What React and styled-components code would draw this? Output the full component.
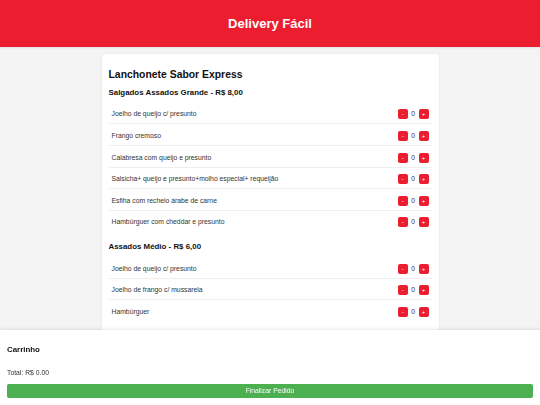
import React from "react";
import styled, { createGlobalStyle } from "styled-components";

const Global = createGlobalStyle`
  html, body { margin: 0; padding: 0; }
  body {
    background: #f4f4f4;
    font-family: "Liberation Sans", Arial, sans-serif;
    color: #333;
    padding-bottom: 90px;
  }
  * { box-sizing: border-box; }
`;

const Header = styled.header`
  height: 47px;
  background: #ec1d2f;
  color: #fff;
  display: flex;
  align-items: center;
  justify-content: center;
  box-shadow: 0 1px 2px rgba(0, 0, 0, 0.08);
`;

const Brand = styled.h1`
  margin: 0;
  font-size: 13px;
  line-height: 16px;
  font-weight: 700;
`;

const Card = styled.main`
  max-width: 337px;
  margin: 7px auto 0;
  background: #fff;
  border-radius: 3px;
  box-shadow: 0 0 3px rgba(0, 0, 0, 0.07);
  padding: 14px 7px 7px;
`;

const Title = styled.h2`
  margin: 0;
  font-size: 10.4px;
  line-height: 13px;
  font-weight: 700;
  color: #111;
`;

const Section = styled.section`
  & + & { padding-top: 1.4px; }
`;

const SectionTitle = styled.h3`
  margin: 7px 0 7.4px;
  font-size: 7.9px;
  line-height: 10px;
  font-weight: 700;
  color: #111;
`;

const List = styled.ul`
  list-style: none;
  margin: 0;
  padding: 0;
`;

const Row = styled.li`
  display: flex;
  align-items: center;
  justify-content: space-between;
  padding: 4px 3px;
  margin-bottom: 2.6px;
  border-bottom: 1px solid #eee;
  font-size: 6.8px;
  line-height: 10px;
  color: #333;
  &:last-child { border-bottom: none; }
`;

const Controls = styled.div`
  display: flex;
  align-items: center;
  gap: 3.4px;
`;

const QtyButton = styled.button`
  width: 10px;
  height: 10px;
  padding: 0;
  border: none;
  border-radius: 2px;
  background: #ec1d2f;
  color: #fff;
  font-family: "Liberation Sans", Arial, sans-serif;
  font-size: 6px;
  line-height: 10px;
  display: flex;
  align-items: center;
  justify-content: center;
`;

const Qty = styled.span`
  font-size: 6.8px;
  color: #333;
  min-width: 4px;
  text-align: center;
`;

const Cart = styled.footer`
  position: fixed;
  left: 0;
  right: 0;
  bottom: 0;
  background: #fff;
  padding: 7px 7px 7.3px;
  box-shadow: 0 -1px 3px rgba(0, 0, 0, 0.1);
`;

const CartTitle = styled.h3`
  margin: 7.8px 0 13.9px;
  font-size: 7.9px;
  line-height: 10px;
  font-weight: 700;
  color: #111;
`;

const Total = styled.p`
  margin: 0 0 7.3px;
  font-size: 6.8px;
  line-height: 8px;
  color: #333;
`;

const Checkout = styled.button`
  display: block;
  width: 100%;
  height: 13.7px;
  border: none;
  border-radius: 2px;
  background: #4caf50;
  color: #fff;
  font-family: "Liberation Sans", Arial, sans-serif;
  font-size: 6.8px;
  line-height: 13.7px;
  padding: 0;
`;

const menu = [
  {
    title: "Salgados Assados Grande - R$ 8,00",
    items: [
      "Joelho de queijo c/ presunto",
      "Frango cremoso",
      "Calabresa com queijo e presunto",
      "Salsicha+ queijo e presunto+molho especial+ requeijão",
      "Esfiha com recheio árabe de carne",
      "Hambúrguer com cheddar e presunto",
    ],
  },
  {
    title: "Assados Médio - R$ 6,00",
    items: [
      "Joelho de queijo c/ presunto",
      "Joelho de frango c/ mussarela",
      "Hambúrguer",
    ],
  },
];

export default function App() {
  return (
    <>
      <Global />
      <Header>
        <Brand>Delivery Fácil</Brand>
      </Header>
      <Card>
        <Title>Lanchonete Sabor Express</Title>
        {menu.map((section) => (
          <Section key={section.title}>
            <SectionTitle>{section.title}</SectionTitle>
            <List>
              {section.items.map((item) => (
                <Row key={item}>
                  <span>{item}</span>
                  <Controls>
                    <QtyButton>-</QtyButton>
                    <Qty>0</Qty>
                    <QtyButton>+</QtyButton>
                  </Controls>
                </Row>
              ))}
            </List>
          </Section>
        ))}
      </Card>
      <Cart>
        <CartTitle>Carrinho</CartTitle>
        <Total>Total: R$ 0.00</Total>
        <Checkout>Finalizar Pedido</Checkout>
      </Cart>
    </>
  );
}
